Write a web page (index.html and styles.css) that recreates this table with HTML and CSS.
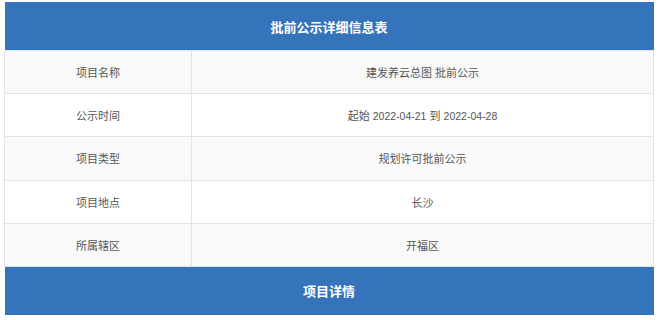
FILE: index.html
```html
<!DOCTYPE html>
<html lang="zh-CN">
<head>
<meta charset="utf-8">
<title>批前公示详细信息表</title>
<link rel="stylesheet" href="styles.css">
</head>
<body>
<div class="page">
  <table class="info">
    <thead>
      <tr><th colspan="2" class="head">批前公示详细信息表</th></tr>
    </thead>
    <tbody>
      <tr class="odd"><td class="label">项目名称</td><td class="value">建发养云总图 批前公示</td></tr>
      <tr><td class="label">公示时间</td><td class="value">起始 <span class="num">2022-04-21</span> 到 <span class="num">2022-04-28</span></td></tr>
      <tr class="odd"><td class="label">项目类型</td><td class="value">规划许可批前公示</td></tr>
      <tr><td class="label">项目地点</td><td class="value">长沙</td></tr>
      <tr class="odd"><td class="label">所属辖区</td><td class="value">开福区</td></tr>
    </tbody>
    <tfoot>
      <tr><th colspan="2" class="head">项目详情</th></tr>
    </tfoot>
  </table>
</div>
</body>
</html>
```
FILE: styles.css
```css
html, body {
  margin: 0;
  padding: 0;
  background: #ffffff;
}
.page {
  padding: 2px 6px 0 4px;
}
.info {
  width: 650px;
  border-collapse: collapse;
  font-family: "Liberation Sans", "Noto Sans CJK SC", sans-serif;
  font-size: 11px;
  color: #555555;
}
.head {
  background: #3573bb;
  color: #ffffff;
  font-family: "Noto Sans CJK SC", sans-serif;
  font-size: 13px;
  font-weight: bold;
  height: 48px;
  padding: 0;
  text-align: center;
  border: none;
}
.info td {
  height: 42.2px;
  padding: 0;
  text-align: center;
  border: 1px solid #e3e3e3;
}
.info tr.odd td {
  background: #f9f9f9;
}
.label {
  width: 186px;
}
.num {
  font-size: 10.5px;
}
```
